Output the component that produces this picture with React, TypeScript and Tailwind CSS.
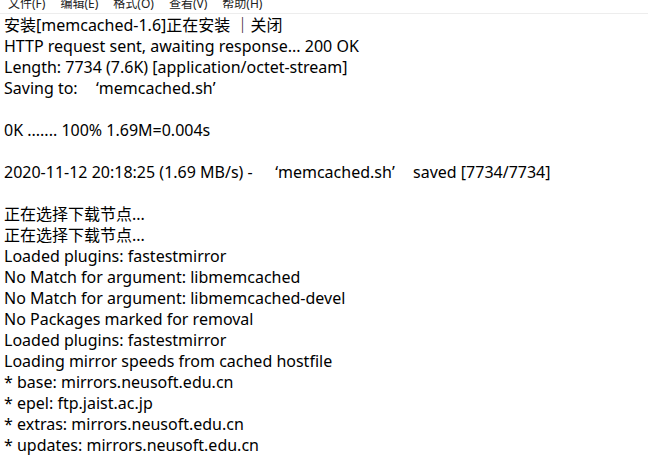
const Q = ({ c }: { c: string }) => (
  <span className={`inline-block w-[17px] ${c === '‘' ? 'text-right' : 'text-left'}`}>{c}</span>
);

const lines: React.ReactNode[] = [
  '安装[memcached-1.6]正在安装 ｜关闭',
  'HTTP request sent, awaiting response... 200 OK',
  'Length: 7734 (7.6K) [application/octet-stream]',
  <>Saving to: <Q c="‘" />memcached.sh<Q c="’" /></>,
  '',
  '0K ....... 100% 1.69M=0.004s',
  '',
  <>2020-11-12 20:18:25 (1.69 MB/s) -  <Q c="‘" />memcached.sh<Q c="’" /> saved [7734/7734]</>,
  '',
  '正在选择下载节点...',
  '正在选择下载节点...',
  'Loaded plugins: fastestmirror',
  'No Match for argument: libmemcached',
  'No Match for argument: libmemcached-devel',
  'No Packages marked for removal',
  'Loaded plugins: fastestmirror',
  'Loading mirror speeds from cached hostfile',
  '* base: mirrors.neusoft.edu.cn',
  '* epel: ftp.jaist.ac.jp',
  '* extras: mirrors.neusoft.edu.cn',
  '* updates: mirrors.neusoft.edu.cn',
];

const menus = ['文件(F)', '编辑(E)', '格式(O)', '查看(V)', '帮助(H)'];

export default function App() {
  return (
    <div className="w-[648px] h-[473px] overflow-hidden bg-white text-black font-['Noto_Sans','Noto_Sans_CJK_SC',sans-serif]">
      <div className="h-[14px] border-b border-[#ededed] flex items-end pl-[8px] gap-[15px] text-[12px] leading-[14px] text-[#222] overflow-hidden">
        {menus.map((m) => (
          <span key={m} className="-translate-y-[2px]">{m}</span>
        ))}
      </div>
      <div className="pl-[4px] pt-[1px] text-[16px] leading-[21px] whitespace-pre">
        {lines.map((l, i) => (
          <div key={i} className="h-[21px]">{l}</div>
        ))}
      </div>
    </div>
  );
}
